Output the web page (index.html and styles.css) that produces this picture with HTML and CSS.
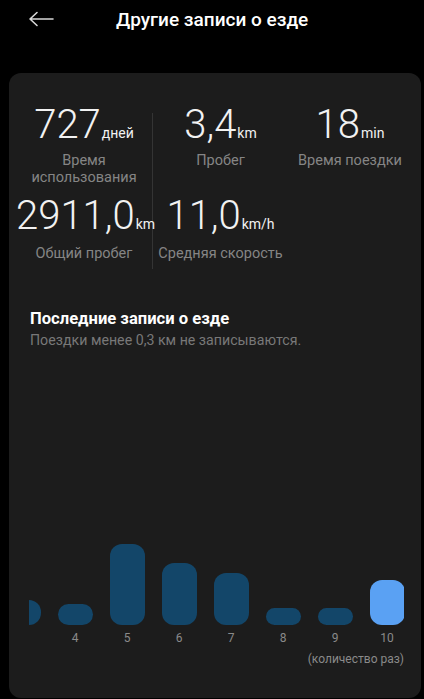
FILE: index.html
```html
<!DOCTYPE html>
<html lang="ru">
<head>
    <meta charset="UTF-8">
    <meta name="viewport" content="width=device-width, initial-scale=1.0">
    <title>Другие записи о езде</title>
    <link rel="stylesheet" href="styles.css">
</head>
<body>
    <div class="topbar">
        <svg class="back" width="26" height="16" viewBox="0 0 26 16">
            <path d="M25 8H2M9 1.5L2 8l7 6.5" fill="none" stroke="#d8d8d8" stroke-width="1.6" stroke-linecap="round" stroke-linejoin="round"/>
        </svg>
        <h1 class="title">Другие записи о езде</h1>
    </div>

    <div class="card">
        <div class="stats">
            <div class="stat">
                <div class="num">727<span class="unit">дней</span></div>
                <div class="label">Время<br>использования</div>
            </div>
            <div class="divider"></div>
            <div class="stat">
                <div class="num">3,4<span class="unit">km</span></div>
                <div class="label">Пробег</div>
            </div>
            <div class="stat">
                <div class="num">18<span class="unit">min</span></div>
                <div class="label">Время поездки</div>
            </div>
            <div class="stat row2">
                <div class="num">2911,0<span class="unit">km</span></div>
                <div class="label">Общий пробег</div>
            </div>
            <div class="stat row2">
                <div class="num">11,0<span class="unit">km/h</span></div>
                <div class="label">Средняя скорость</div>
            </div>
        </div>

        <div class="records">
            <h2>Последние записи о езде</h2>
            <p>Поездки менее 0,3 км не записываются.</p>
        </div>

        <div class="chart">
            <div class="track">
                <div class="col"><div class="bars"><div class="bar" style="height:25px"></div></div><span></span></div>
                <div class="col"><div class="bars"><div class="bar" style="height:21px"></div></div><span>4</span></div>
                <div class="col"><div class="bars"><div class="bar" style="height:81px"></div></div><span>5</span></div>
                <div class="col"><div class="bars"><div class="bar" style="height:62px"></div></div><span>6</span></div>
                <div class="col"><div class="bars"><div class="bar" style="height:52px"></div></div><span>7</span></div>
                <div class="col"><div class="bars"><div class="bar" style="height:17px"></div></div><span>8</span></div>
                <div class="col"><div class="bars"><div class="bar" style="height:17px"></div></div><span>9</span></div>
                <div class="col"><div class="bars"><div class="bar active" style="height:45px"></div></div><span>10</span></div>
            </div>
            <div class="axis-note">(количество раз)</div>
        </div>
    </div>
</body>
</html>
```

FILE: styles.css
```css
body {
    margin: 0;
    background: #000;
    font-family: Roboto, "Noto Sans", sans-serif;
    color: #f2f2f2;
}
.topbar {
    display: flex;
    align-items: center;
    height: 38px;
    padding-left: 28px;
}
.back {
    display: block;
}
.title {
    margin: 0 0 0 62px;
    font-size: 19px;
    font-weight: 500;
    color: #fff;
}
.card {
    margin: 35px 3px 0 9px;
    padding: 30px 0 31px 7px;
    background: #1c1c1c;
    border-radius: 12px;
}
.stats {
    display: grid;
    grid-template-columns: 136px 1px 135px 124px;
    row-gap: 8px;
}
.stat {
    text-align: center;
}
.divider {
    grid-column: 2;
    grid-row: 1 / 3;
    margin: 10px 0 -6px;
    background: #343434;
}
.num {
    font-size: 40px;
    font-weight: 300;
    line-height: 44px;
    white-space: nowrap;
}
.unit {
    font-size: 14px;
    font-weight: 400;
    margin-left: 1px;
}
.label {
    margin-top: -2px;
    font-size: 14.5px;
    line-height: 16.5px;
    color: #858585;
}
.row2 .label {
    margin-top: 0;
}
.records {
    margin-top: 46px;
    padding-left: 14px;
}
.records h2 {
    margin: 0;
    font-size: 16.6px;
    line-height: 20px;
    font-weight: 700;
    color: #fff;
}
.records p {
    margin: 2px 0 0;
    font-size: 14.2px;
    line-height: 18px;
    color: #787878;
}
.chart {
    margin: 191px 0 0 13px;
    width: 375px;
    overflow: hidden;
}
.track {
    display: flex;
    margin-left: -32px;
}
.col {
    flex: none;
    width: 52px;
    display: flex;
    flex-direction: column;
    align-items: center;
}
.bars {
    height: 85px;
    display: flex;
    align-items: flex-end;
}
.bar {
    width: 35px;
    border-radius: 12px;
    background: #134669;
}
.bar.active {
    background: #5aa1f3;
}
.col span {
    min-height: 16px;
    margin-top: 5px;
    font-size: 12px;
    line-height: 16px;
    color: #8a8a8a;
}
.axis-note {
    margin-top: 5px;
    text-align: right;
    font-size: 12px;
    line-height: 16px;
    color: #8a8a8a;
}
```
